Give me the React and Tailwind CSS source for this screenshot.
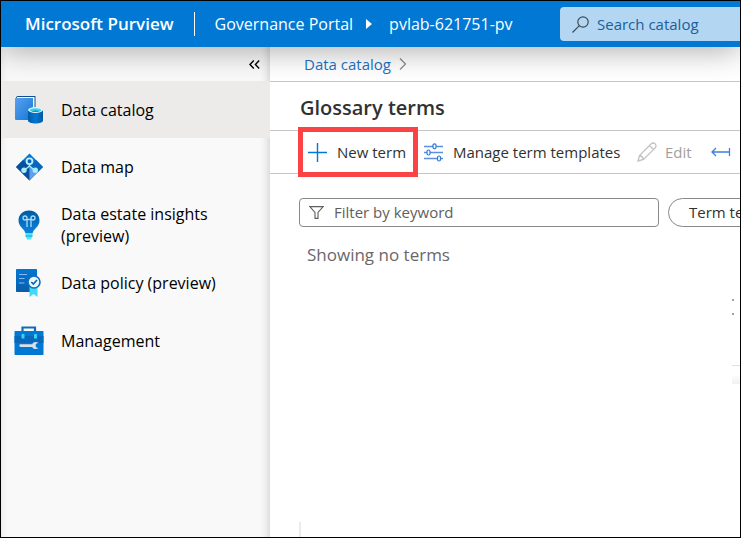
import React from "react";

function CatalogIcon() {
  return (
    <svg width="30" height="30" viewBox="0 0 30 30" aria-hidden="true">
      <defs>
        <linearGradient id="book" x1="0" y1="0" x2="1" y2="1">
          <stop offset="0" stopColor="#5ea0ef" />
          <stop offset="1" stopColor="#0f78d6" />
        </linearGradient>
        <linearGradient id="drum" x1="0" y1="0" x2="1" y2="0">
          <stop offset="0" stopColor="#005ba1" />
          <stop offset="0.5" stopColor="#0078d4" />
          <stop offset="1" stopColor="#005ba1" />
        </linearGradient>
      </defs>
      <path d="M2 3 Q2 1 4 1 H21.500 V22 H4 Z" fill="#0f4f8e" />
      <path d="M3 2 H20.500 V20 H3 Z" fill="#fff" />
      <path d="M1 3 H19 V25 H2 Q1 25 1 24 Z" fill="url(#book)" />
      <path d="M14 15 V25.500 C14 29.400 29 29.400 29 25.500 V15 Z" fill="url(#drum)" />
      <ellipse cx="21.500" cy="15" rx="7.500" ry="2.900" fill="#e4f2fb" />
      <ellipse cx="21.500" cy="15.200" rx="5.600" ry="1.900" fill="#32d4f5" />
      <path d="M17.500 16.300 Q21.500 14.700 25.500 16.300 Q21.500 17.800 17.500 16.300" fill="#198ab3" />
    </svg>
  );
}

function MapIcon() {
  return (
    <svg width="30" height="30" viewBox="0 0 30 30" aria-hidden="true">
      <path d="M15.500 1.500 L29 15 L15.500 28.500 L2 15 Z" fill="#0078d4" />
      <path d="M2 15 L9 8 L15.500 14.500 V28.500 Z" fill="#0a4f9c" />
      <path d="M15.500 14.500 L22 8 L29 15 L24 20 Z" fill="#0c65bd" />
      <path d="M15.500 14.500 L24 20 L15.500 28.500 Z" fill="#5ea0ef" />
      <path d="M15.500 12 V14 L10 18.500 M15.500 14 L21 18.500" stroke="#9cebff" strokeWidth="1.500" fill="none" />
      <circle cx="15.500" cy="9.300" r="2.900" fill="#0a62b8" stroke="#c3f1ff" strokeWidth="1.800" />
      <circle cx="10" cy="18.200" r="2.700" fill="#a8edff" />
      <circle cx="21.300" cy="18.200" r="2.700" fill="#a8edff" />
    </svg>
  );
}

function BulbIcon() {
  return (
    <svg width="30" height="30" viewBox="0 0 30 30" aria-hidden="true">
      <defs>
        <linearGradient id="bulb" x1="0" y1="0" x2="0" y2="1">
          <stop offset="0" stopColor="#005ba1" />
          <stop offset="1" stopColor="#0a84e0" />
        </linearGradient>
      </defs>
      <path d="M15 0.500 C8.500 0.500 4.500 5 4.500 10.500 C4.500 17 10.500 18.500 11.500 23.500 H18.500 C19.500 18.500 25.500 17 25.500 10.500 C25.500 5 21.500 0.500 15 0.500 Z" fill="url(#bulb)" />
      <g fill="none" stroke="#a9dcfa" strokeWidth="1.300">
        <path d="M13 17 V9.500 H17 V17" />
        <circle cx="11" cy="8" r="2" />
        <circle cx="19" cy="8" r="2" />
      </g>
      <path d="M11.500 23.500 H18.500 V26 L17 29.500 H13 L11.500 26 Z" fill="#50e6ff" />
      <path d="M11.500 26 H18.500" stroke="#198ab3" strokeWidth="0.800" />
    </svg>
  );
}

function PolicyIcon() {
  return (
    <svg width="30" height="30" viewBox="0 0 30 30" aria-hidden="true">
      <defs>
        <linearGradient id="sheet" x1="0" y1="0" x2="0" y2="1">
          <stop offset="0" stopColor="#0078d4" />
          <stop offset="1" stopColor="#0a5ca8" />
        </linearGradient>
      </defs>
      <rect x="2" y="1" width="21" height="23" rx="0.800" fill="url(#sheet)" />
      <path d="M5 6.500 H13 M5 10.500 H10.500 M5 15 H10.500" stroke="#83b9f9" strokeWidth="1.200" />
      <path d="M15.500 19 V29 L19.500 26 L23.500 29 V19 Z" fill="#42d9f3" />
      <circle cx="20" cy="14" r="6" fill="#e8faff" stroke="#106ebe" strokeWidth="1.600" />
      <path d="M17.300 14 L19.300 16 L23 12" fill="none" stroke="#0f65b5" strokeWidth="1.700" />
    </svg>
  );
}

function ToolboxIcon() {
  return (
    <svg width="30" height="30" viewBox="0 0 30 30" aria-hidden="true">
      <path d="M8.500 6 V1.500 H21 V6" fill="none" stroke="#0f6cbd" strokeWidth="2.200" />
      <rect x="0.500" y="5" width="29" height="24" rx="0.800" fill="#0078d4" />
      <path d="M0.500 10 H29.500 V17 H0.500 Z" fill="#0968bb" />
      <rect x="7.500" y="8" width="3" height="4.500" rx="0.500" fill="#32d4f5" />
      <rect x="20" y="8" width="3" height="4.500" rx="0.500" fill="#32d4f5" />
      <path d="M6.500 18.200 H18.300 C19 16.200 21.500 15.200 24.500 16.700 L21.800 18 V21 L24.500 22.300 C21.500 23.800 19 23 18.300 20.900 H6.500 C5 20.900 5 18.200 6.500 18.200 Z" fill="#dcdfe3" />
    </svg>
  );
}

const navItems = [
  { label: "Data catalog", Icon: CatalogIcon, active: true },
  { label: "Data map", Icon: MapIcon },
  { label: "Data estate insights (preview)", Icon: BulbIcon },
  { label: "Data policy (preview)", Icon: PolicyIcon },
  { label: "Management", Icon: ToolboxIcon },
];

function Header() {
  return (
    <header className="relative z-10 flex h-[46px] shrink-0 items-center whitespace-nowrap bg-[#0078d4] pl-6 text-base text-white shadow-[0_4px_30px_rgba(0,0,0,0.32)]">
      <span className="text-[17px] font-semibold">Microsoft Purview</span>
      <span className="ml-5 h-6 w-px bg-white" />
      <span className="ml-5">Governance Portal</span>
      <svg className="ml-3 shrink-0" width="8" height="12" viewBox="0 0 8 12" aria-hidden="true">
        <path d="M1 1 L7 6 L1 11 Z" fill="#fff" />
      </svg>
      <span className="ml-4">pvlab-621751-pv</span>
      <label className="ml-auto flex h-[34px] w-[180px] shrink-0 items-center gap-2 rounded-l-sm bg-[#b3d6f2] pl-3">
        <svg className="shrink-0" width="17" height="17" viewBox="0 0 17 17" fill="none" stroke="#3f4a55" strokeWidth="1.200" aria-hidden="true">
          <circle cx="11" cy="6" r="5.200" />
          <path d="M7.300 9.700 L0.500 16.500" />
        </svg>
        <input aria-label="Search catalog" placeholder="Search catalog" className="w-full min-w-0 bg-transparent text-[15px] outline-none placeholder:text-[#1b5e9b]" />
      </label>
    </header>
  );
}

function Sidebar() {
  return (
    <nav className="flex w-[269px] shrink-0 flex-col bg-[#f9f9f9] shadow-[inset_-10px_0_8px_-8px_rgba(0,0,0,0.16),inset_8px_0_8px_-8px_rgba(0,0,0,0.1)]">
      <button aria-label="Collapse navigation" className="flex h-[34px] items-center justify-end pr-[10px]">
        <svg width="11" height="9" viewBox="0 0 11 9" fill="none" stroke="#000" strokeWidth="1.400" aria-hidden="true">
          <path d="M4.800 0.500 L1 4.500 L4.800 8.500 M10.200 0.500 L6.400 4.500 L10.200 8.500" />
        </svg>
      </button>
      {navItems.map(({ label, Icon, active }) => (
        <a
          key={label}
          href="#"
          aria-current={active ? "page" : undefined}
          className={
            active
              ? "flex h-[57px] items-center bg-[#edebe9] pl-[13px] text-base/[22px] font-medium text-black"
              : "flex h-[58px] items-center pl-[13px] text-base/[22px] font-medium text-black"
          }
        >
          <span className="shrink-0"><Icon /></span>
          <span className="ml-[17px] w-[168px]">{label}</span>
        </a>
      ))}
    </nav>
  );
}

function Toolbar() {
  return (
    <div role="toolbar" aria-label="Glossary actions" className="flex h-11 items-center overflow-visible whitespace-nowrap border-y border-[#c8c6c4] pl-7 text-[15px] text-[#323130]">
      <button className="relative flex h-full w-[120px] items-center gap-[10px] pl-[10px]">
        <svg width="19" height="19" viewBox="0 0 19 19" stroke="#0078d4" strokeWidth="1.400" aria-hidden="true">
          <path d="M9.500 0 V19 M0 9.500 H19" />
        </svg>
        New term
        <span className="pointer-events-none absolute inset-x-0 -inset-y-1 border-[5px] border-[#fb4345]" />
      </button>
      <button className="ml-[6px] flex w-[213px] shrink-0 items-center gap-[10px]">
        <svg width="19" height="19" viewBox="0 0 19 19" fill="none" aria-hidden="true">
          <path d="M0 3.500 H19 M0 9.500 H19 M0 15.500 H19" stroke="#5c8fdc" strokeWidth="1.400" />
          <g fill="#fff" stroke="#2a7bd6" strokeWidth="1.200">
            <rect x="9" y="0.800" width="3" height="5" rx="1.500" />
            <rect x="3" y="7" width="3" height="5" rx="1.500" />
            <rect x="13.500" y="13" width="3" height="5" rx="1.500" />
          </g>
        </svg>
        Manage term templates
      </button>
      <button disabled className="flex w-[74px] shrink-0 items-center gap-2 text-[#a19f9d]">
        <svg width="20" height="20" viewBox="0 0 20 20" fill="none" stroke="#c4c2c0" strokeWidth="1.300" aria-hidden="true">
          <path d="M1 19 L2.500 13.500 L14 2 C15.200 0.700 17 0.700 18.200 1.900 C19.400 3.100 19.300 4.900 18 6.100 L6.500 17.500 Z M12.500 3.500 L16.500 7.500 M2.500 13.500 Q5.500 14.200 6.500 17.500" />
        </svg>
        Edit
      </button>
      <button aria-label="Import terms" className="shrink-0">
        <svg width="20" height="12" viewBox="0 0 20 12" fill="none" stroke="#3f80dc" strokeWidth="1.300" aria-hidden="true">
          <path d="M1 6 H19 M5 2 L1 6 L5 10 M18.500 2 V10" />
        </svg>
      </button>
    </div>
  );
}

export default function App() {
  return (
    <div className="flex min-h-screen flex-col overflow-hidden border border-black bg-white font-['Open_Sans','Noto_Sans',sans-serif]">
      <Header />
      <div className="flex grow">
        <Sidebar />
        <main className="flex min-w-0 grow flex-col overflow-hidden">
          <div aria-label="Breadcrumb" className="flex h-[35px] items-center gap-2 border-b border-[#c8c6c4] pl-[34px] text-[15px]">
            <a href="#" className="text-[#1a73c7]">Data catalog</a>
            <svg width="8" height="12" viewBox="0 0 8 12" fill="none" stroke="#8a8886" strokeWidth="1.200" aria-hidden="true">
              <path d="M1 0.500 L6.500 6 L1 11.500" />
            </svg>
          </div>
          <h1 className="flex h-12 items-center pl-[30px] pt-1 text-xl font-semibold text-[#323130]">Glossary terms</h1>
          <Toolbar />
          <div className="mt-6 flex h-[29px] shrink-0 gap-[9px] whitespace-nowrap pl-[29px] text-[15px]">
            <label className="flex w-[360px] shrink-0 items-center gap-[10px] rounded-sm border border-[#8a8886] pl-[9px]">
              <svg className="shrink-0" width="15" height="13" viewBox="0 0 15 13" fill="none" stroke="#605e5c" strokeWidth="1.100" aria-hidden="true">
                <path d="M0.800 0.600 H14.200 L9 6.500 V12.400 H6 V6.500 Z" />
              </svg>
              <input aria-label="Filter by keyword" placeholder="Filter by keyword" className="w-full min-w-0 bg-transparent text-[15px] outline-none placeholder:text-[#605e5c]" />
            </label>
            <button className="shrink-0 rounded-full border border-[#8a8886] px-5 text-[#323130]">Term template</button>
          </div>
          <p className="mt-4 pl-[37px] text-[17px]/6 text-[#69676a]">Showing no terms</p>
          <div className="mt-8 flex w-2 flex-col self-end" aria-hidden="true">
            <span className="size-[2px] bg-[#8fa5b8]" />
            <span className="mt-3 size-[2px] bg-[#8fa5b8]" />
            <span className="mt-[50px] h-px bg-[#e1e1e1]" />
            <span className="mt-2 h-[10px] bg-linear-to-b from-white to-[#f0f0f0]" />
          </div>
          <div className="mt-auto ml-[29px] h-[15px] w-[2px] bg-[#edebe9]" />
        </main>
      </div>
    </div>
  );
}
